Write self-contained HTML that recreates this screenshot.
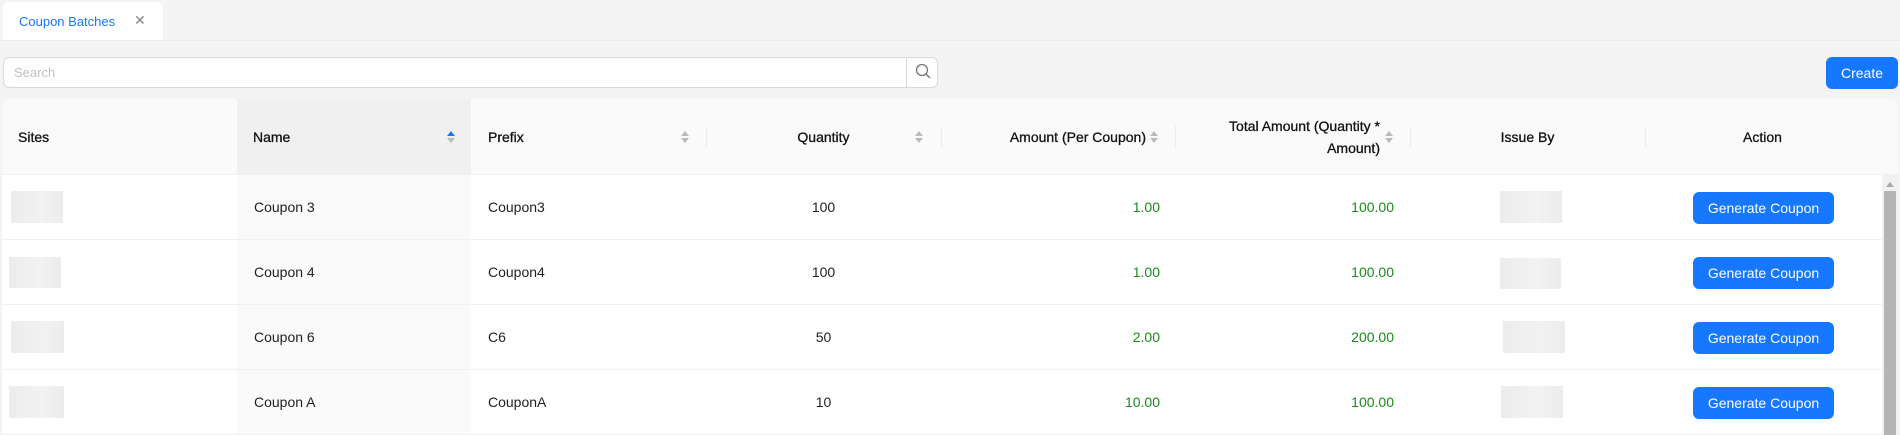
<!DOCTYPE html>
<html><head><meta charset="utf-8"><style>
*{box-sizing:border-box;margin:0;padding:0}
body{width:1900px;height:435px;background:#f4f4f4;font-family:"Liberation Sans",sans-serif;font-size:14px;color:#222;position:relative;overflow:hidden}
.abs{position:absolute}
.tab{left:3px;top:2px;width:160px;height:38px;background:#fff;border-radius:6px 6px 0 0;}
.tab span{position:absolute;left:16px;top:12px;color:#1677ff;font-size:13px}
.tab i{position:absolute;left:131px;top:10px;color:#888;font-style:normal;font-size:14px}
.line{left:0;top:40px;width:1900px;height:1px;background:#ececec}
.search{left:3px;top:57px;width:935px;height:31px;background:#fff;border:1px solid #d9d9d9;border-radius:6px}
.search span{position:absolute;left:10px;top:7px;color:#bfbfbf;font-size:13px}
.search .btn{position:absolute;left:902px;top:-1px;width:33px;height:31px;border-left:1px solid #d9d9d9}
.create{left:1826px;top:57px;width:72px;height:32px;background:#1677ff;color:#fff;border-radius:6px;text-align:center;line-height:32px}
.table{left:2px;top:99px;width:1896px;height:336px;background:#fff;border-radius:8px 8px 0 0;overflow:hidden}
.head{left:0;top:0;width:1896px;height:76px;background:#fafafa;border-bottom:1px solid #f0f0f0}
.th{position:absolute;top:0;height:76px;font-size:14px;color:#111;display:flex;align-items:center;-webkit-text-stroke:0.3px #111}
.sep{position:absolute;top:27px;width:1px;height:22px;background:#ececec}
.sort{position:absolute;width:8px}
.row{position:absolute;left:0;width:1880px;height:65px;border-bottom:1px solid #f0f0f0}
.td{position:absolute;top:0;height:64px;line-height:64px}
.g{color:#1a8a1a}
.ph{position:absolute;background:linear-gradient(90deg,#ececec,#f2f2f2 60%,#ececec);height:32px}
.gb{position:absolute;left:1691px;top:17px;width:141px;height:32px;background:#1677ff;color:#fff;border-radius:6px;text-align:center;line-height:32px;font-size:14px}
</style></head><body>
<div class="abs tab"><span>Coupon Batches</span><i>✕</i></div>
<div class="abs line"></div>
<div class="abs search"><span>Search</span><div class="btn"><svg width="33" height="29" viewBox="0 0 33 29"><circle cx="15" cy="13" r="5.5" fill="none" stroke="#777" stroke-width="1.3"/><path d="M19 17l4 4" stroke="#777" stroke-width="1.4"/></svg></div></div>
<div class="abs create">Create</div>
<div class="abs table">
 <div class="abs head">
  <div class="abs" style="left:235px;top:0;width:234px;height:76px;background:#f0f0f0"></div>
  <div class="th" style="left:16px">Sites</div>
  <div class="th" style="left:251px">Name</div>
  <svg class="sort" style="left:445px;top:32px" width="8" height="12"><path d="M0 5L4 0 8 5z" fill="#1677ff"/><path d="M0 7L4 12 8 7z" fill="#bbb"/></svg>
  <div class="th" style="left:486px">Prefix</div>
  <svg class="sort" style="left:679px;top:32px" width="8" height="12"><path d="M0 5L4 0 8 5z" fill="#bbb"/><path d="M0 7L4 12 8 7z" fill="#bbb"/></svg>
  <div class="sep" style="left:704px"></div>
  <div class="th" style="left:704px;width:235px;justify-content:center">Quantity</div>
  <svg class="sort" style="left:913px;top:32px" width="8" height="12"><path d="M0 5L4 0 8 5z" fill="#bbb"/><path d="M0 7L4 12 8 7z" fill="#bbb"/></svg>
  <div class="sep" style="left:939px"></div>
  <div class="th" style="left:939px;width:205px;justify-content:flex-end">Amount (Per Coupon)</div>
  <svg class="sort" style="left:1148px;top:32px" width="8" height="12"><path d="M0 5L4 0 8 5z" fill="#bbb"/><path d="M0 7L4 12 8 7z" fill="#bbb"/></svg>
  <div class="sep" style="left:1173px"></div>
  <div class="th" style="left:1173px;width:205px;justify-content:flex-end;text-align:right;line-height:22px">Total Amount (Quantity *<br>Amount)</div>
  <svg class="sort" style="left:1383px;top:32px" width="8" height="12"><path d="M0 5L4 0 8 5z" fill="#bbb"/><path d="M0 7L4 12 8 7z" fill="#bbb"/></svg>
  <div class="sep" style="left:1408px"></div>
  <div class="th" style="left:1408px;width:235px;justify-content:center">Issue By</div>
  <div class="sep" style="left:1643px"></div>
  <div class="th" style="left:1643px;width:235px;justify-content:center">Action</div>
 </div>
 <div class="abs" style="left:235px;top:76px;width:234px;height:260px;background:#fafafa"></div>
 <div class="abs" style="left:1880px;top:76px;width:16px;height:260px;background:#f1f1f1"></div>
 <svg class="abs" style="left:1884px;top:82px" width="8" height="6"><path d="M0 6L4 1 8 6z" fill="#aaa"/></svg>
 <div class="abs" style="left:1882px;top:92px;width:12px;height:244px;background:#b4b4b4"></div>

 <div class="row" style="top:76px">
  <div class="ph" style="left:9px;top:16px;width:52px"></div>
  <div class="td" style="left:252px">Coupon 3</div>
  <div class="td" style="left:486px">Coupon3</div>
  <div class="td" style="left:704px;width:235px;text-align:center">100</div>
  <div class="td g" style="left:939px;width:219px;text-align:right">1.00</div>
  <div class="td g" style="left:1173px;width:219px;text-align:right">100.00</div>
  <div class="ph" style="left:1498px;top:16px;width:62px"></div>
  <div class="gb">Generate Coupon</div>
 </div>
 <div class="row" style="top:141px">
  <div class="ph" style="left:7px;top:17px;width:52px;height:31px"></div>
  <div class="td" style="left:252px">Coupon 4</div>
  <div class="td" style="left:486px">Coupon4</div>
  <div class="td" style="left:704px;width:235px;text-align:center">100</div>
  <div class="td g" style="left:939px;width:219px;text-align:right">1.00</div>
  <div class="td g" style="left:1173px;width:219px;text-align:right">100.00</div>
  <div class="ph" style="left:1498px;top:18px;width:61px;height:31px"></div>
  <div class="gb">Generate Coupon</div>
 </div>
 <div class="row" style="top:206px">
  <div class="ph" style="left:9px;top:16px;width:53px"></div>
  <div class="td" style="left:252px">Coupon 6</div>
  <div class="td" style="left:486px">C6</div>
  <div class="td" style="left:704px;width:235px;text-align:center">50</div>
  <div class="td g" style="left:939px;width:219px;text-align:right">2.00</div>
  <div class="td g" style="left:1173px;width:219px;text-align:right">200.00</div>
  <div class="ph" style="left:1501px;top:16px;width:62px"></div>
  <div class="gb">Generate Coupon</div>
 </div>
 <div class="row" style="top:271px">
  <div class="ph" style="left:7px;top:16px;width:55px"></div>
  <div class="td" style="left:252px">Coupon A</div>
  <div class="td" style="left:486px">CouponA</div>
  <div class="td" style="left:704px;width:235px;text-align:center">10</div>
  <div class="td g" style="left:939px;width:219px;text-align:right">10.00</div>
  <div class="td g" style="left:1173px;width:219px;text-align:right">100.00</div>
  <div class="ph" style="left:1499px;top:16px;width:62px"></div>
  <div class="gb">Generate Coupon</div>
 </div>
</div>
</body></html>
